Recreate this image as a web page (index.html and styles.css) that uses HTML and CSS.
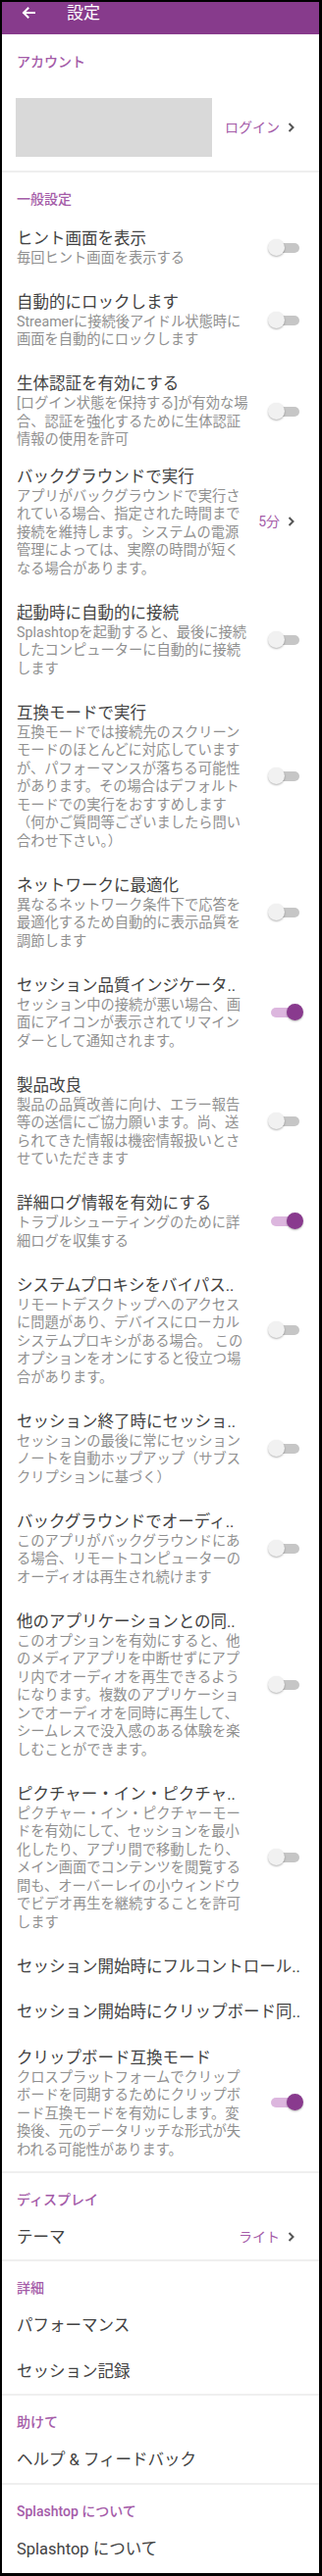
FILE: index.html
```html
<!DOCTYPE html>
<html lang="ja">
<head>
<meta charset="utf-8">
<title>設定</title>
<link rel="stylesheet" href="styles.css">
</head>
<body>
<div class="frame">
  <header class="appbar">
    <svg class="back" viewBox="0 0 14 12" width="14" height="12"><path d="M13 6H2M6.5 1.5L2 6l4.5 4.5" fill="none" stroke="#fff" stroke-width="2" stroke-linecap="square"/></svg>
    <div class="appbar-title">設定</div>
  </header>

  <div class="section-title first">アカウント</div>
  <div class="account">
    <div class="account-mask"></div>
    <div class="value">ログイン<svg class="chev" viewBox="0 0 7 10" width="7" height="10"><path d="M1.5 1l4 4-4 4" fill="none" stroke="#555" stroke-width="2"/></svg></div>
  </div>
  <div class="divider"></div>

  <div class="section-title general">一般設定</div>

  <div class="item"><div class="item-text"><div class="item-title">ヒント画面を表示</div><div class="item-sub">毎回ヒント画面を表示する</div></div><span class="switch"></span></div>
  <div class="item"><div class="item-text"><div class="item-title">自動的にロックします</div><div class="item-sub">Streamerに接続後アイドル状態時に<br>画面を自動的にロックします</div></div><span class="switch"></span></div>
  <div class="item tight"><div class="item-text"><div class="item-title">生体認証を有効にする</div><div class="item-sub">[ログイン状態を保持する]が有効な場<br>合、認証を強化するために生体認証<br>情報の使用を許可</div></div><span class="switch"></span></div>
  <div class="item"><div class="item-text"><div class="item-title">バックグラウンドで実行</div><div class="item-sub">アプリがバックグラウンドで実行さ<br>れている場合、指定された時間まで<br>接続を維持します。システムの電源<br>管理によっては、実際の時間が短く<br>なる場合があります。</div></div><div class="value">5分<svg class="chev" viewBox="0 0 7 10" width="7" height="10"><path d="M1.5 1l4 4-4 4" fill="none" stroke="#555" stroke-width="2"/></svg></div></div>
  <div class="item"><div class="item-text"><div class="item-title">起動時に自動的に接続</div><div class="item-sub">Splashtopを起動すると、最後に接続<br>したコンピューターに自動的に接続<br>します</div></div><span class="switch"></span></div>
  <div class="item"><div class="item-text"><div class="item-title">互換モードで実行</div><div class="item-sub">互換モードでは接続先のスクリーン<br>モードのほとんどに対応しています<br>が、パフォーマンスが落ちる可能性<br>があります。その場合はデフォルト<br>モードでの実行をおすすめします<br>（何かご質問等ございましたら問い<br>合わせ下さい。）</div></div><span class="switch"></span></div>
  <div class="item"><div class="item-text"><div class="item-title">ネットワークに最適化</div><div class="item-sub">異なるネットワーク条件下で応答を<br>最適化するため自動的に表示品質を<br>調節します</div></div><span class="switch"></span></div>
  <div class="item"><div class="item-text"><div class="item-title">セッション品質インジケータ..</div><div class="item-sub">セッション中の接続が悪い場合、画<br>面にアイコンが表示されてリマイン<br>ダーとして通知されます。</div></div><span class="switch on"></span></div>
  <div class="item"><div class="item-text"><div class="item-title">製品改良</div><div class="item-sub">製品の品質改善に向け、エラー報告<br>等の送信にご協力願います。尚、送<br>られてきた情報は機密情報扱いとさ<br>せていただきます</div></div><span class="switch"></span></div>
  <div class="item"><div class="item-text"><div class="item-title">詳細ログ情報を有効にする</div><div class="item-sub">トラブルシューティングのために詳<br>細ログを収集する</div></div><span class="switch on"></span></div>
  <div class="item"><div class="item-text"><div class="item-title">システムプロキシをバイパス..</div><div class="item-sub">リモートデスクトップへのアクセス<br>に問題があり、デバイスにローカル<br>システムプロキシがある場合。 この<br>オプションをオンにすると役立つ場<br>合があります。</div></div><span class="switch"></span></div>
  <div class="item"><div class="item-text"><div class="item-title">セッション終了時にセッショ..</div><div class="item-sub">セッションの最後に常にセッション<br>ノートを自動ホップアップ（サブス<br>クリプションに基づく）</div></div><span class="switch"></span></div>
  <div class="item"><div class="item-text"><div class="item-title">バックグラウンドでオーディ..</div><div class="item-sub">このアプリがバックグラウンドにあ<br>る場合、リモートコンピューターの<br>オーディオは再生され続けます</div></div><span class="switch"></span></div>
  <div class="item"><div class="item-text"><div class="item-title">他のアプリケーションとの同..</div><div class="item-sub">このオプションを有効にすると、他<br>のメディアアプリを中断せずにアプ<br>リ内でオーディオを再生できるよう<br>になります。複数のアプリケーショ<br>ンでオーディオを同時に再生して、<br>シームレスで没入感のある体験を楽<br>しむことができます。</div></div><span class="switch"></span></div>
  <div class="item"><div class="item-text"><div class="item-title">ピクチャー・イン・ピクチャ..</div><div class="item-sub">ピクチャー・イン・ピクチャーモー<br>ドを有効にして、セッションを最小<br>化したり、アプリ間で移動したり、<br>メイン画面でコンテンツを閲覧する<br>間も、オーバーレイの小ウィンドウ<br>でビデオ再生を継続することを許可<br>します</div></div><span class="switch"></span></div>
  <div class="item"><div class="item-title">セッション開始時にフルコントロール..</div></div>
  <div class="item"><div class="item-title">セッション開始時にクリップボード同..</div></div>
  <div class="item"><div class="item-text"><div class="item-title">クリップボード互換モード</div><div class="item-sub">クロスプラットフォームでクリップ<br>ボードを同期するためにクリップボ<br>ード互換モードを有効にします。変<br>換後、元のデータリッチな形式が失<br>われる可能性があります。</div></div><span class="switch on"></span></div>
  <div class="divider"></div>

  <div class="section-title">ディスプレイ</div>
  <div class="item"><div class="item-title">テーマ</div><div class="value">ライト<svg class="chev" viewBox="0 0 7 10" width="7" height="10"><path d="M1.5 1l4 4-4 4" fill="none" stroke="#555" stroke-width="2"/></svg></div></div>
  <div class="divider"></div>

  <div class="section-title">詳細</div>
  <div class="item"><div class="item-title">パフォーマンス</div></div>
  <div class="item"><div class="item-title">セッション記録</div></div>
  <div class="divider"></div>

  <div class="section-title">助けて</div>
  <div class="item"><div class="item-title">ヘルプ &amp; フィードバック</div></div>
  <div class="divider"></div>

  <div class="section-title">Splashtop について</div>
  <div class="item"><div class="item-title">Splashtop について</div></div>
</div>
</body>
</html>
```

FILE: styles.css
```css
* { box-sizing: border-box; }
body {
  margin: 0;
  background: #fff;
  font-family: Roboto, "Noto Sans CJK JP", sans-serif;
}
.frame {
  width: 328px;
  height: 2628px;
  border: 2px solid #000;
  border-right-width: 3px;
  border-bottom-width: 3px;
  background: #fff;
  overflow: hidden;
}
.appbar {
  height: 33px;
  background: #873b8c;
  display: flex;
  align-items: flex-start;
  padding-left: 20px;
  color: #fff;
}
.back { margin-top: 5px; }
.appbar-title {
  margin-left: 32px;
  font-size: 17px;
  line-height: 22px;
}
.section-title {
  color: #a45ba8;
  font-size: 14px;
  line-height: 20px;
  padding: 17px 0 5px 15px;
  font-weight: 500;
}
.section-title.first { padding-top: 18px; }
.section-title.general { padding-bottom: 7px; }
.divider { height: 2px; background: #efefef; }
.account {
  display: flex;
  align-items: center;
  padding: 22px 0 14px 14px;
}
.account-mask {
  width: 200px;
  height: 60px;
  background: #d9d9d9;
}
.value {
  margin-left: auto;
  margin-right: 25px;
  display: flex;
  align-items: center;
  gap: 8px;
  color: #a45ba8;
  font-size: 14px;
  line-height: 20px;
}
.item {
  display: flex;
  align-items: center;
  padding: 12.75px 0 12.75px 15px;
}
.item.tight { padding-bottom: 5px; }
.item-text { width: 240px; }
.item-title {
  color: #424242;
  font-size: 16.5px;
  line-height: 21px;
  white-space: nowrap;
}
.item-sub {
  color: #909090;
  font-size: 14.25px;
  line-height: 18.5px;
  white-space: nowrap;
}
.switch {
  position: relative;
  width: 36px;
  height: 18px;
  margin-left: auto;
  margin-right: 16px;
  flex: none;
}
.switch::before {
  content: "";
  position: absolute;
  left: 3px;
  right: 4px;
  top: 4px;
  height: 10px;
  border-radius: 5px;
  background: #c6c6c6;
}
.switch::after {
  content: "";
  position: absolute;
  left: 0;
  top: 0;
  width: 17px;
  height: 17px;
  border-radius: 50%;
  background: #f1f1f1;
  box-shadow: 0 1px 2px rgba(0,0,0,0.3);
}
.switch.on::before { background: #dcb6de; }
.switch.on::after { left: 19px; background: #893a8e; }
```
